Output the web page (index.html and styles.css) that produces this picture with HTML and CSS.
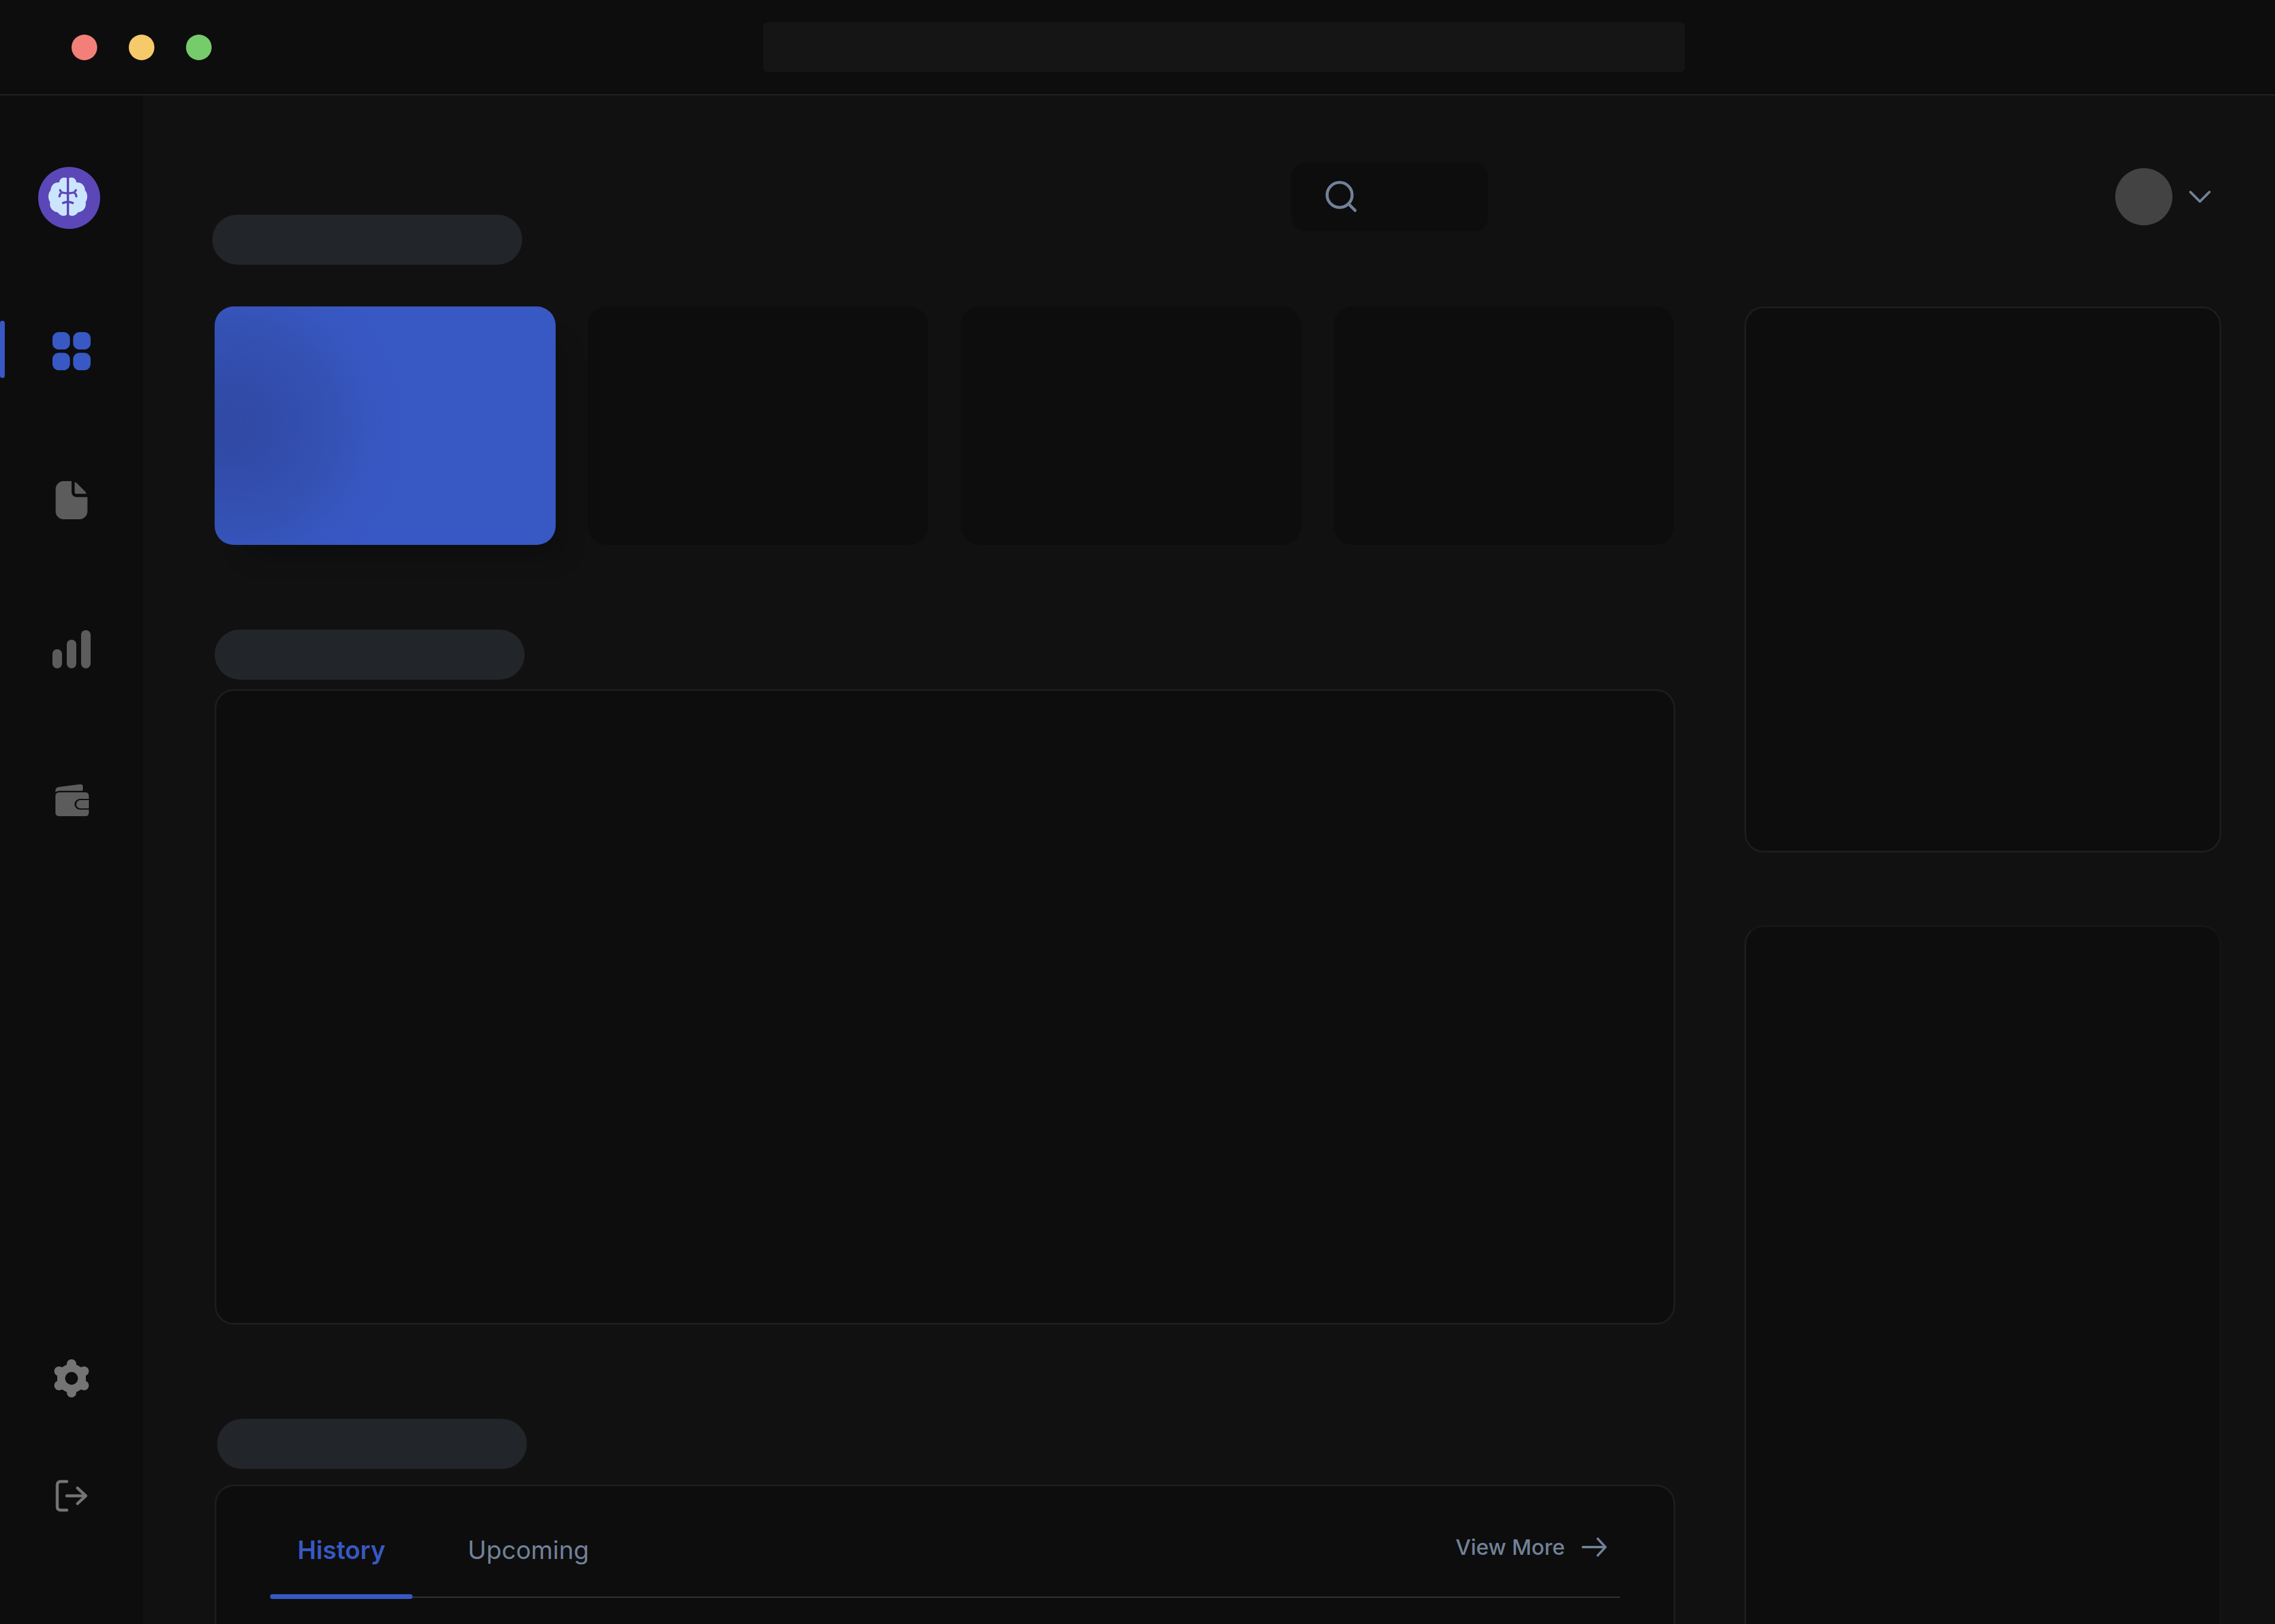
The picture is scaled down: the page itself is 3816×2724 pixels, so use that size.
FILE: index.html
```html
<!DOCTYPE html>
<html lang="en">
<head>
<meta charset="utf-8">
<title>Dashboard</title>
<link rel="stylesheet" href="styles.css">
</head>
<body>
<header class="titlebar">
  <div class="lights">
    <span class="light light-close"></span>
    <span class="light light-minimise"></span>
    <span class="light light-zoom"></span>
  </div>
  <div class="address"></div>
</header>
<div class="shell">
  <nav class="sidebar" aria-label="Main">
    <a class="logo" href="#" aria-label="Home">
      <svg viewBox="0 0 104 104">
        <circle cx="52" cy="52" r="52" fill="#5c47b8"/>
        <g fill="#cce5ff">
          <path d="M48 18.5Q46 17.7 43 17.7A8.5 8.5 0 0 0 35.4 26A13 13 0 0 0 21 39A17 17 0 0 0 20 59A14 14 0 0 0 32.5 76Q37 82 43 82Q46 82 48 80Z"/>
          <path d="M51.6 18.5Q53.6 17.7 56.6 17.7A8.5 8.5 0 0 1 64.2 26A13 13 0 0 1 78.6 39A17 17 0 0 1 79.6 59A14 14 0 0 1 67 76Q62.6 82 56.6 82Q53.6 82 51.6 80Z"/>
        </g>
        <path d="M49.8 17V82M36.7 39L39.2 42.8Q49.8 45.6 60.6 42.8L63.3 39M38.6 43.5Q36 46 35.8 49.5M61.2 43.5Q63.8 46 64 49.5M41.7 60.5Q49.8 56.6 58.2 60.5" fill="none" stroke="#5c47b8" stroke-width="3.7" stroke-linecap="round" stroke-linejoin="round"/>
      </svg>
    </a>
    <div class="nav-main">
      <a class="nav-item nav-active" href="#" aria-label="Overview">
        <svg viewBox="0 0 24 24"><rect width="11" height="11" rx="4"/><rect x="13" width="11" height="11" rx="4"/><rect y="13" width="11" height="11" rx="4"/><rect x="13" y="13" width="11" height="11" rx="4"/></svg>
      </a>
      <a class="nav-item" href="#" aria-label="Documents">
        <svg viewBox="0 0 24 24"><path d="M12 0H7a5 5 0 0 0-5 5v14a5 5 0 0 0 5 5h10a5 5 0 0 0 5-5V10H15a3 3 0 0 1-3-3Z"/><path d="M14 .6V7a1 1 0 0 0 1 1h6.400a5 5 0 0 0-.9-1.500L15.500 1.500A5 5 0 0 0 14 .6Z"/></svg>
      </a>
      <a class="nav-item" href="#" aria-label="Statistics">
        <svg viewBox="0 0 24 24"><rect y="12" width="6" height="12" rx="3"/><rect x="9" y="6" width="6" height="18" rx="3"/><rect x="18" width="6" height="24" rx="3"/></svg>
      </a>
      <a class="nav-item" href="#" aria-label="Wallet">
        <svg viewBox="0 0 64 64"><path d="M5 21V19Q5 14 11 13L46 8.500Q51 8 51 12V19.500H12Q8 19.500 5 21.500Z"/><path d="M61 32V28Q61 22 55 22H12Q5 22 5 28V56Q5 62 12 62H55Q61 62 61 56V51H46A9 9 0 0 1 46 33H61Z"/><path d="M61 35H47A7 7 0 0 0 47 49H61Z"/></svg>
      </a>
    </div>
    <div class="nav-foot">
      <a class="nav-item" href="#" aria-label="Settings">
        <svg viewBox="0 0 64 64"><path fill-rule="evenodd" d="M24 9Q20 11 15 14L8 26V38L15 50Q20 53 24 55H40Q44 53 49 50L56 38V26L49 14Q44 11 40 9ZM32 21.300a10.700 10.700 0 1 0 0 21.400a10.700 10.700 0 1 0 0-21.400Z"/><circle cx="32" cy="8" r="8"/><circle cx="32" cy="56" r="8"/><circle cx="11" cy="20" r="8"/><circle cx="11" cy="44" r="8"/><circle cx="53" cy="20" r="8"/><circle cx="53" cy="44" r="8"/></svg>
      </a>
      <a class="nav-item" href="#" aria-label="Log out">
        <svg class="line-icon" viewBox="0 0 64 64"><path d="M24 8H14Q8 8 8 14V50Q8 56 14 56H24M24 32H55M42 19L56 32L42 45"/></svg>
      </a>
    </div>
  </nav>
  <div class="page">
    <div class="topbar">
      <div class="pill"></div>
      <button class="search" type="button" aria-label="Search">
        <svg class="line-icon" viewBox="0 0 56 56"><circle cx="25" cy="25" r="21"/><path d="M42 42L51 51"/></svg>
      </button>
      <button class="profile" type="button" aria-label="Account">
        <span class="avatar"></span>
        <svg class="line-icon" viewBox="0 0 36 20"><path d="M2 2L18 18L34 2"/></svg>
      </button>
    </div>
    <div class="columns">
      <main class="content">
        <section class="stats">
          <div class="stat stat-active"></div>
          <div class="stat"></div>
          <div class="stat"></div>
          <div class="stat"></div>
        </section>
        <section class="block chart-block">
          <div class="pill"></div>
          <div class="card chart"></div>
        </section>
        <section class="block history-block">
          <div class="pill pill-inset"></div>
          <div class="card history">
            <div class="tabs">
              <button class="tab tab-active" type="button">History</button>
              <button class="tab" type="button">Upcoming</button>
              <a class="more" href="#">View More
                <svg class="line-icon" viewBox="0 0 42 32"><path d="M2 16H40M27 2L40 16L27 30"/></svg>
              </a>
            </div>
          </div>
        </section>
      </main>
      <aside class="side">
        <div class="card side-top"></div>
        <div class="card side-bottom"></div>
      </aside>
    </div>
  </div>
</div>
</body>
</html>
```
FILE: styles.css
```css
* { box-sizing: border-box; }

body {
  margin: 0;
  height: 100vh;
  display: flex;
  flex-direction: column;
  overflow: hidden;
  background: #111111;
  font-family: "Inter", sans-serif;
}

button { border: 0; margin: 0; padding: 0; background: none; font: inherit; }
svg { display: block; fill: currentColor; }
.line-icon { fill: none; stroke: currentColor; stroke-linecap: round; stroke-linejoin: round; }

/* window chrome */
.titlebar {
  flex: none;
  display: grid;
  grid-template-columns: 1280fr 1546fr 990fr;
  align-items: center;
  height: 160px;
  background: #0d0d0d;
  border-bottom: 2px solid #232323;
}
.lights { display: flex; gap: 53px; padding-left: 120px; }
.light { width: 43px; height: 43px; border-radius: 50%; }
.light-close { background: #f28079; }
.light-minimise { background: #f6ca6a; }
.light-zoom { background: #76cb6b; }
.address { height: 84px; border-radius: 8px; background: #151515; }

.shell { flex: 1; min-height: 0; display: flex; }

/* sidebar */
.sidebar {
  flex: none;
  display: flex;
  flex-direction: column;
  width: 240px;
  padding: 120px 0 170px;
  background: #0d0d0d;
}
.logo { width: 104px; margin-left: 64px; }
.nav-main { display: flex; flex-direction: column; gap: 154px; padding-top: 154px; color: #5c5c5c; }
.nav-foot { display: flex; flex-direction: column; gap: 101px; margin-top: auto; color: #747474; }
.nav-item {
  display: flex;
  align-items: center;
  justify-content: center;
  height: 96px;
  padding-top: 6px;
  color: inherit;
}
.nav-item svg { width: 64px; height: 64px; }
.nav-item .line-icon { stroke-width: 5px; }
.nav-active { position: relative; color: #3858c4; }
.nav-active::before {
  content: "";
  position: absolute;
  left: 0;
  top: 0;
  width: 8px;
  height: 96px;
  border-radius: 4px;
  background: #3858c4;
}

/* page */
.page { flex: 1; display: flex; flex-direction: column; padding: 112px 90px 0 120px; }
.pill { width: 520px; height: 84px; border-radius: 42px; background: #222529; }
.topbar { display: flex; align-items: flex-start; height: 242px; color: #718199; }
.topbar .pill { margin: 88px 0 0 -4px; }
.search {
  display: flex;
  align-items: center;
  width: 330px;
  height: 116px;
  margin-left: auto;
  margin-right: 1052px;
  padding-left: 56px;
  border-radius: 24px;
  background: #0d0d0d;
  color: inherit;
}
.search svg { width: 56px; height: 56px; stroke-width: 5px; overflow: visible; }
.profile { display: flex; align-items: center; gap: 28px; height: 116px; margin-right: 18px; color: inherit; }
.avatar { width: 96px; height: 96px; border-radius: 50%; background: #434343; }
.profile svg { width: 36px; height: 20px; stroke-width: 4px; overflow: visible; }

.columns { flex: 1; display: grid; grid-template-columns: 2450fr 800fr; gap: 116px; }
.content, .side { display: flex; flex-direction: column; }
.card { border: 3px solid #1c1d1d; border-radius: 32px; background: #0d0d0d; }

.stats { display: grid; grid-template-columns: repeat(4, 1fr); gap: 54px; margin-bottom: 142px; padding-right: 2px; }
.stat { height: 400px; border-radius: 32px; background: #0d0d0d; }
.stat-active {
  background: radial-gradient(circle at 30px 200px, #304aa5 0, #314ba8 60px, #3451b3 160px, #3756bf 230px, #3858c4 290px);
  box-shadow: 32px 40px 40px -24px rgba(0, 0, 0, 0.25);
}

.block { display: flex; flex-direction: column; }
.chart-block { gap: 16px; margin-bottom: 158px; }
.chart { height: 1066px; }
.history-block { flex: 1; gap: 26px; }
.pill-inset { margin-left: 4px; }
.history { flex: 1; border-bottom: 0; border-radius: 32px 32px 0 0; padding: 47px 90px 0; }

.tabs { display: flex; height: 140px; border-bottom: 2px solid #34353c; }
.tab { position: relative; height: 118px; margin-right: 46px; padding: 0 46px; font-size: 42px; color: #718199; }
.tab-active { font-weight: 600; color: #3858c4; }
.tab-active::after {
  content: "";
  position: absolute;
  left: 0;
  right: 0;
  top: 134px;
  height: 8px;
  border-radius: 4px;
  background: #3858c4;
}
.more {
  display: flex;
  align-items: center;
  gap: 28px;
  height: 110px;
  margin-left: auto;
  padding-right: 22px;
  font-size: 36px;
  font-weight: 500;
  color: #718199;
  text-decoration: none;
}
.more svg { width: 42px; height: 32px; stroke-width: 4px; }

.side { gap: 122px; }
.side-top { height: 916px; }
.side-bottom {
  flex: 1;
  border-top-color: #151616;
  border-right-color: #141414;
  border-bottom: 0;
  border-radius: 32px 32px 0 0;
}
```
